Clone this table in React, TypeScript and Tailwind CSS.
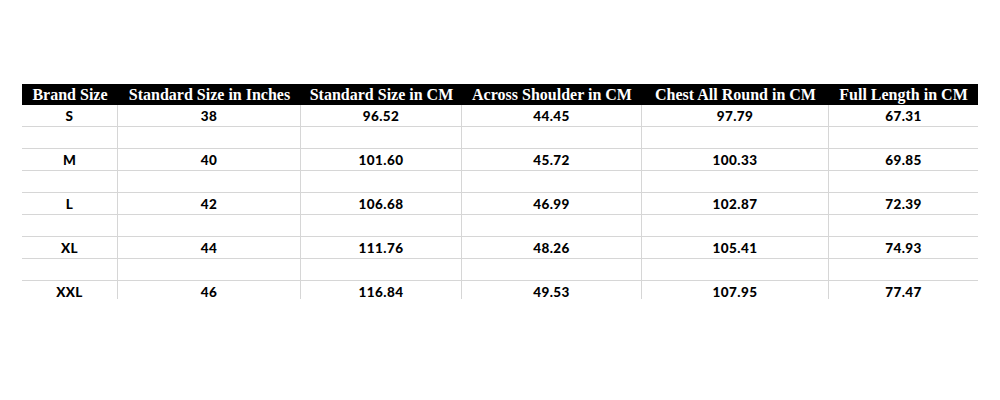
const columns = [
  { title: 'Brand Size', width: 'w-[96px]' },
  { title: 'Standard Size in Inches', width: 'w-[183px]' },
  { title: 'Standard Size in CM', width: 'w-[161px]' },
  { title: 'Across Shoulder in CM', width: 'w-[180px]' },
  { title: 'Chest All Round in CM', width: 'w-[187px]' },
  { title: 'Full Length in CM', width: 'w-[149px]' },
];

const sizes = [
  ['S', '38', '96.52', '44.45', '97.79', '67.31'],
  ['M', '40', '101.60', '45.72', '100.33', '69.85'],
  ['L', '42', '106.68', '46.99', '102.87', '72.39'],
  ['XL', '44', '111.76', '48.26', '105.41', '74.93'],
  ['XXL', '46', '116.84', '49.53', '107.95', '77.47'],
];

// every size row is followed by an empty spacer row, like the source sheet
const rows: string[][] = sizes.flatMap((r, i) =>
  i < sizes.length - 1 ? [r, ['', '', '', '', '', '']] : [r]
);

export default function App() {
  return (
    <div className="w-[1000px] h-[400px] bg-white pt-[84px] pl-[22px]">
      <div className="w-[956px] h-[215px] overflow-hidden">
        {/* Header */}
        <div className="flex h-[21px] bg-black text-white font-bold text-[16px] leading-[21px] font-['Liberation_Serif',serif]">
          {columns.map((c) => (
            <div key={c.title} className={`${c.width} shrink-0 text-center whitespace-nowrap`}>
              {c.title}
            </div>
          ))}
        </div>

        {/* Body */}
        {rows.map((row, ri) => (
          <div key={ri} className="flex h-[22px] border-b border-[#d6d6d6]">
            {row.map((cell, ci) => (
              <div
                key={ci}
                className={`${columns[ci].width} shrink-0 flex items-center justify-center pt-[2px] text-[13.5px] font-black text-black tracking-[0.4px] font-['Lato',sans-serif] ${
                  ci < row.length - 1 ? 'border-r border-[#d6d6d6]' : ''
                }`}
              >
                {cell}
              </div>
            ))}
          </div>
        ))}
      </div>
    </div>
  );
}
